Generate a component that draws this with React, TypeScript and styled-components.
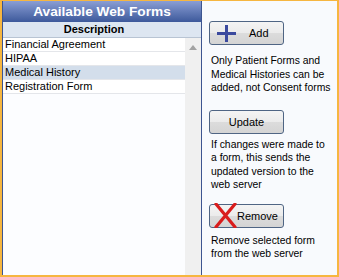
import React from "react";
import styled, { createGlobalStyle } from "styled-components";

const forms = ["Financial Agreement", "HIPAA", "Medical History", "Registration Form"];
const selectedForm = "Medical History";

const GlobalStyle = createGlobalStyle`
  body {
    margin: 0;
    font-family: "Liberation Sans", Arial, sans-serif;
  }
`;

const PlusIcon = () => (
  <svg width="19" height="17" viewBox="0 0 19 17">
    <rect x="0" y="7" width="19" height="3" fill="#3b4a9e" />
    <rect x="8" y="0" width="3" height="17" fill="#3b4a9e" />
  </svg>
);

const CrossIcon = () => (
  <svg width="23" height="25" viewBox="0 0 23 25">
    <path d="M2 1 L21 24 M21 1 L2 24" stroke="#d91c1c" strokeWidth="3.2" strokeLinecap="round" fill="none" />
  </svg>
);

const App = () => {
  return (
    <>
      <GlobalStyle />
      <Frame>
        <FormsPanel>
          <Title>Available Web Forms</Title>
          <ColumnHeader>
            <ColumnCell>Description</ColumnCell>
          </ColumnHeader>
          <ListBody>
            <List>
              {forms.map((form) => (
                <Row key={form} selected={form === selectedForm}>
                  {form}
                </Row>
              ))}
            </List>
            <Scrollbar>
              <ArrowUp />
            </Scrollbar>
          </ListBody>
        </FormsPanel>
        <ActionPanel>
          <Section top={20}>
            <ActionButton pad={7}>
              <PlusIcon />
              <ButtonLabel indent={13}>Add</ButtonLabel>
            </ActionButton>
            <Note gap={9}>Only Patient Forms and Medical Histories can be added, not Consent forms</Note>
          </Section>
          <Section top={15}>
            <ActionButton centered>
              <ButtonLabel>Update</ButtonLabel>
            </ActionButton>
            <Note gap={4}>If changes were made to a form, this sends the updated version to the web server</Note>
          </Section>
          <Section top={12}>
            <ActionButton pad={4}>
              <CrossIcon />
              <ButtonLabel>Remove</ButtonLabel>
            </ActionButton>
            <Note gap={6}>Remove selected form from the web server</Note>
          </Section>
        </ActionPanel>
      </Frame>
    </>
  );
};

const Frame = styled.div`
  width: 339px;
  height: 277px;
  box-sizing: border-box;
  border: 2px solid #f6b640;
  border-top-width: 1px;
  display: flex;
  overflow: hidden;
`;

const FormsPanel = styled.div`
  width: 200px;
  box-sizing: border-box;
  border-left: 1px solid #3d5590;
  border-right: 1px solid #3d5590;
  display: flex;
  flex-direction: column;
  background: #fcfdff;
`;

const Title = styled.div`
  height: 21px;
  line-height: 21px;
  flex-shrink: 0;
  background: linear-gradient(#8a9ed4, #3d599b);
  color: #ffffff;
  font-weight: bold;
  font-size: 13.7px;
  text-align: center;
`;

const ColumnHeader = styled.div`
  height: 15px;
  flex-shrink: 0;
  background: #dde6f1;
  border-bottom: 1px solid #b8c4d3;
  display: flex;
`;

const ColumnCell = styled.div`
  width: 182px;
  font-size: 11px;
  font-weight: bold;
  line-height: 15px;
  text-align: center;
  color: #000;
`;

const ListBody = styled.div`
  flex: 1;
  display: flex;
`;

const List = styled.div`
  width: 182px;
`;

const Row = styled.div<{ selected?: boolean }>`
  height: 13px;
  line-height: 13px;
  padding-left: 2px;
  font-size: 11px;
  color: #000;
  white-space: nowrap;
  border-bottom: 1px solid #e4e6ea;
  background: ${(p) => (p.selected ? "#d3deeb" : "#ffffff")};
`;

const Scrollbar = styled.div`
  flex: 1;
  background: #f0f0f0;
  display: flex;
  justify-content: center;
  padding-top: 7px;
`;

const ArrowUp = styled.div`
  width: 0;
  height: 0;
  border-left: 4px solid transparent;
  border-right: 4px solid transparent;
  border-bottom: 5px solid #a3a3a3;
`;

const ActionPanel = styled.div`
  flex: 1;
  background: #f8fafd;
  padding-left: 7px;
  display: flex;
  flex-direction: column;
`;

const Section = styled.div<{ top: number }>`
  margin-top: ${(p) => p.top}px;
  display: flex;
  flex-direction: column;
`;

const ActionButton = styled.div<{ centered?: boolean; pad?: number }>`
  width: 75px;
  height: 24px;
  box-sizing: border-box;
  border: 1px solid #4f6584;
  border-radius: 3px;
  background: linear-gradient(#f4f4f4 0%, #ebebeb 50%, #dcdcdc 51%, #d4d4d4 100%);
  display: flex;
  align-items: center;
  justify-content: ${(p) => (p.centered ? "center" : "flex-start")};
  padding-left: ${(p) => p.pad ?? 0}px;
  overflow: visible;
`;

const ButtonLabel = styled.span<{ indent?: number }>`
  font-size: 11px;
  color: #000;
  margin-left: ${(p) => p.indent ?? 0}px;
`;

const Note = styled.div<{ gap: number }>`
  margin-top: ${(p) => p.gap}px;
  margin-left: 2px;
  width: 122px;
  font-size: 10.4px;
  line-height: 13.5px;
  color: #000;
`;

export default App;
